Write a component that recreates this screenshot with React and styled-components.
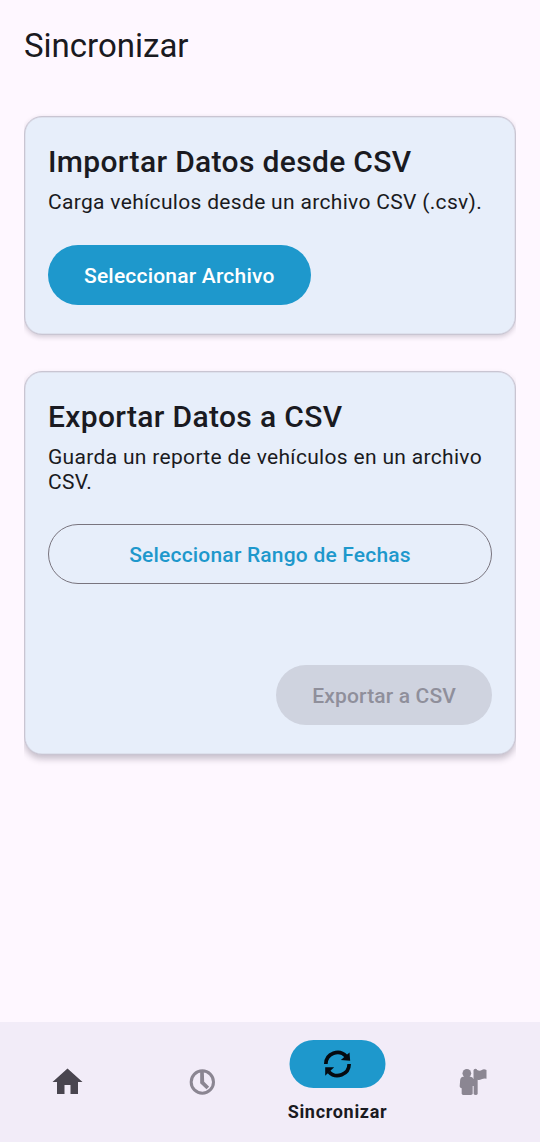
import React from "react";
import styled, { createGlobalStyle } from "styled-components";

const GlobalStyle = createGlobalStyle`
  *, *::before, *::after { box-sizing: border-box; }
  body { margin: 0; background: #fef7ff; }
`;

const Screen = styled.div`
  display: flex;
  flex-direction: column;
  width: 540px;
  height: 1142px;
  background: #fef7ff;
  color: #1a1a21;
  font-family: Roboto, sans-serif;
`;

const TopBar = styled.header`
  display: flex;
  align-items: center;
  height: 92px;
  padding: 0 24px;
`;

const ScreenTitle = styled.h1`
  margin: 0;
  font-size: 33px;
  font-weight: 400;
  line-height: 42px;
  letter-spacing: 0;
`;

const Content = styled.main`
  flex: 1;
  display: flex;
  flex-direction: column;
  gap: 36px;
  padding: 24px;
`;

const Card = styled.section`
  display: flex;
  flex-direction: column;
  align-items: flex-start;
  height: ${({ $height }) => $height}px;
  padding: 23px 23px 29px;
  border: 1px solid #c9c5d2;
  border-radius: 18px;
  background: #e7eefa;
  box-shadow:
    inset 0 0 0 0.5px rgba(201, 197, 210, 0.6),
    ${({ $raised }) =>
      $raised
        ? "0 4px 6px rgba(40, 30, 50, 0.25)"
        : "0 2px 5px rgba(40, 30, 50, 0.2)"};
  clip-path: inset(-20px 0);
`;

const CardTitle = styled.h2`
  margin: 0;
  font-size: 30px;
  font-weight: 500;
  line-height: 44px;
  letter-spacing: 0.34px;
`;

const CardText = styled.p`
  margin: 6px 0 0;
  font-size: 21px;
  line-height: 24.5px;
  letter-spacing: 0.32px;
`;

const Button = styled.button`
  flex: none;
  height: 60px;
  padding: ${({ $variant }) => ($variant === "outlined" ? 2.5 : 1.5)}px 36px 0;
  border: ${({ $variant }) =>
    $variant === "outlined" ? "1.5px solid #79747e" : "0"};
  border-radius: 30px;
  background: ${({ $variant }) =>
    ({ filled: "#1e98cc", outlined: "transparent", disabled: "#cfd3df" })[$variant]};
  color: ${({ $variant }) =>
    ({ filled: "#ffffff", outlined: "#1e98cc", disabled: "#8f8f9b" })[$variant]};
  font-family: inherit;
  font-size: 21px;
  font-weight: 500;
  letter-spacing: ${({ $variant }) => ($variant === "disabled" ? 0.15 : 0.2)}px;
  white-space: nowrap;
`;

const PushedButton = styled(Button)`
  margin-top: auto;
  align-self: flex-end;
`;

const SelectButton = styled(Button)`
  margin-top: ${({ $gap }) => $gap}px;
  align-self: ${({ $wide }) => ($wide ? "stretch" : "flex-start")};
`;

const NavBar = styled.nav`
  display: grid;
  grid-template-columns: repeat(4, 1fr);
  height: 120px;
  background: #f2ecf8;
`;

const NavItem = styled.a`
  display: flex;
  flex-direction: column;
  align-items: center;
  justify-content: ${({ $active }) => ($active ? "flex-start" : "center")};
  padding-top: ${({ $active }) => ($active ? 18 : 0)}px;
  color: ${({ $tone }) => $tone};
  transform: translateX(-0.5px);
`;

const Indicator = styled.span`
  display: flex;
  align-items: center;
  justify-content: center;
  width: 96px;
  height: 48px;
  border-radius: 24px;
  background: #1e98cc;
  color: #050a10;
`;

const NavLabel = styled.span`
  margin-top: 12px;
  color: #1a1a21;
  font-size: 18px;
  font-weight: 700;
  line-height: 24px;
  letter-spacing: 0.7px;
  margin-left: 1px;
`;

const Icon = styled.svg`
  display: block;
  width: 36px;
  height: 36px;
`;

const HomeIcon = () => (
  <Icon viewBox="0 0 24 24" fill="currentColor">
    <path d="M10 20v-6h4v6h5v-8h3L12 3 2 12h3v8z" />
  </Icon>
);

const ClockIcon = () => (
  <Icon viewBox="0 0 108 108" fill="none" stroke="currentColor">
    <circle cx="53.5" cy="54" r="33.5" strokeWidth="9" />
    <path d="M47 24h11l1 29 15 15-8 8-19-18z" fill="currentColor" stroke="none" />
  </Icon>
);

const SyncIcon = () => (
  <Icon viewBox="0 0 108 108" fill="none" stroke="currentColor" strokeWidth="11">
    <path d="M19 54A35 35 0 0 1 80 31" />
    <path d="M89 54A35 35 0 0 1 28 77" />
    <path d="M90 19.5L92 44L64 42Z" fill="currentColor" stroke="none" />
    <path d="M17 64H44L17 89Z" fill="currentColor" stroke="none" />
  </Icon>
);

const GuideIcon = () => (
  <Icon viewBox="0 0 108 108" fill="currentColor">
    <circle cx="37" cy="28" r="13" />
    <path d="M26 38H49Q55 39 57 46V19Q58 14 62.500 14Q67 14 68 18Q76 22 82 18Q88 14 96 18V44Q88 42 81 46Q74 49 69.500 47V90Q68 93 64 93Q59 93 57.500 90V66H54.500V90Q52 93 48 93H27Q23 93 21.500 89V73Q15 72 15.500 67L17 48Q18 39 26 38Z" />
  </Icon>
);

export default function App() {
  return (
    <>
      <GlobalStyle />
      <Screen>
        <TopBar>
          <ScreenTitle>Sincronizar</ScreenTitle>
        </TopBar>
        <Content>
          <Card $height={219}>
            <CardTitle>Importar Datos desde CSV</CardTitle>
            <CardText>Carga vehículos desde un archivo CSV (.csv).</CardText>
            <SelectButton $variant="filled" $gap={30.5}>Seleccionar Archivo</SelectButton>
          </Card>
          <Card $height={384} $raised>
            <CardTitle>Exportar Datos a CSV</CardTitle>
            <CardText>Guarda un reporte de vehículos en un archivo CSV.</CardText>
            <SelectButton $variant="outlined" $gap={30} $wide>
              Seleccionar Rango de Fechas
            </SelectButton>
            <PushedButton $variant="disabled" disabled>Exportar a CSV</PushedButton>
          </Card>
        </Content>
        <NavBar>
          <NavItem $tone="#49454f"><HomeIcon /></NavItem>
          <NavItem $tone="#8b8692"><ClockIcon /></NavItem>
          <NavItem $active>
            <Indicator><SyncIcon /></Indicator>
            <NavLabel>Sincronizar</NavLabel>
          </NavItem>
          <NavItem $tone="#8b8692"><GuideIcon /></NavItem>
        </NavBar>
      </Screen>
    </>
  );
}
